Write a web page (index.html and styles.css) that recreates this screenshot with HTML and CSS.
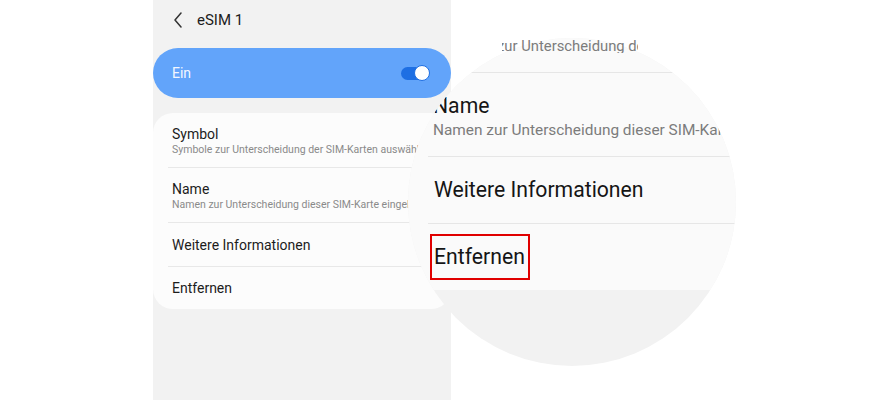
FILE: index.html
```html
<!DOCTYPE html>
<html lang="de">
<head>
<meta charset="utf-8">
<title>eSIM 1</title>
<link rel="stylesheet" href="styles.css">
</head>
<body>
<div class="stage">
  <div class="phone">
    <div class="header">
      <svg class="back" width="10" height="16" viewBox="0 0 10 16"><path d="M8 1 L2 8 L8 15" fill="none" stroke="#333" stroke-width="1.5" stroke-linecap="round" stroke-linejoin="round"/></svg>
      <span class="title">eSIM 1</span>
    </div>
    <div class="switchbar">
      <span class="on-label">Ein</span>
      <span class="toggle"><span class="track"></span><span class="knob"></span></span>
    </div>
    <div class="card">
      <div class="row two">
        <div class="row-title">Symbol</div>
        <div class="row-sub">Symbole zur Unterscheidung der SIM-Karten auswählen</div>
      </div>
      <div class="row two">
        <div class="row-title">Name</div>
        <div class="row-sub">Namen zur Unterscheidung dieser SIM-Karte eingeben</div>
      </div>
      <div class="row one">
        <div class="row-title">Weitere Informationen</div>
      </div>
      <div class="row one last">
        <div class="row-title">Entfernen</div>
      </div>
    </div>
  </div>

  <div class="lens">
    <div class="lens-card">
      <div class="lens-row top"></div>
      <div class="lens-row name">
        <div class="lens-title">Name</div>
        <div class="lens-sub">Namen zur Unterscheidung dieser SIM-Karte eingeben</div>
      </div>
      <div class="lens-row single">
        <div class="lens-title">Weitere Informationen</div>
      </div>
      <div class="lens-row single last">
        <div class="lens-title boxed">Entfernen</div>
      </div>
    </div>
  </div>

  <div class="peek"><span class="peek-text">zur Unterscheidung der SIM-Karten</span></div>
</div>
</body>
</html>
```

FILE: styles.css
```css
* { box-sizing: border-box; }
html, body { margin: 0; padding: 0; background: #ffffff; }
body { font-family: Roboto, "Noto Sans", "Liberation Sans", sans-serif; }

.stage {
  position: relative;
  width: 879px;
  height: 400px;
  overflow: hidden;
  background: #ffffff;
}

.phone {
  margin-left: 153px;
  width: 298px;
  height: 400px;
  background: #f2f2f2;
  display: flex;
  flex-direction: column;
}

.header {
  height: 40px;
  display: flex;
  align-items: center;
  padding-left: 19px;
  margin-bottom: 8px;
}
.back { margin-left: 1px; margin-right: 14px; }
.title { font-size: 15px; color: #1c1c1c; }

.switchbar {
  height: 50px;
  border-radius: 25px;
  background: #62a4fa;
  display: flex;
  align-items: center;
  justify-content: space-between;
  padding: 0 21px 0 19px;
}
.on-label { color: #f2f7ff; font-size: 14px; }
.toggle {
  position: relative;
  width: 29px;
  height: 16px;
  display: block;
}
.track {
  position: absolute;
  left: 0; top: 1.5px;
  width: 26px; height: 13px;
  border-radius: 7px;
  background: #1e6fe3;
}
.knob {
  position: absolute;
  right: 0; top: 0;
  width: 16px; height: 16px;
  border-radius: 50%;
  background: #ffffff;
  border: 1.5px solid #1e6fe3;
}

.card {
  margin-top: 15px;
  background: #fcfcfc;
  border-radius: 20px;
  padding: 0 15px;
}
.row {
  border-bottom: 1px solid #e8e8e8;
  padding-left: 4px;
  overflow: hidden;
}
.row.two { height: 55px; padding-top: 13px; }
.row.one { height: 44px; display: flex; align-items: center; }
.row.last { height: 42px; border-bottom: none; }
.row-title { font-size: 14px; line-height: 16px; color: #1c1c1c; white-space: nowrap; }
.row-sub { font-size: 10.5px; line-height: 14px; margin-top: 1px; color: #8a8a8a; white-space: nowrap; }

/* magnifier */
.peek {
  position: absolute;
  z-index: 2;
  left: 502px;
  top: 38px;
  width: 136px;
  height: 15px;
  overflow: hidden;
}
.peek-text {
  display: block;
  margin-left: -5px;
  font-size: 14.8px;
  line-height: 17px;
  color: #7c7c7c;
  white-space: nowrap;
}

.lens {
  position: absolute;
  z-index: 1;
  left: 408px;
  top: 38px;
  width: 328px;
  height: 328px;
  border-radius: 50%;
  overflow: hidden;
  background: #f2f2f2;
}
.lens-card {
  height: 252px;
  background: #fafafa;
  padding-left: 20px;
  display: flex;
  flex-direction: column;
}
.lens-row { border-bottom: 1.5px solid #e6e6e6; }
.lens-row.top { height: 35px; }
.lens-row.name { height: 84px; padding-top: 21px; padding-left: 5px; }
.lens-row.single { height: 67px; display: flex; align-items: center; padding-left: 6px; }
.lens-row.last { height: 66px; border-bottom: none; padding-left: 2px; }
.lens-title { font-size: 21.2px; line-height: 24px; color: #151515; white-space: nowrap; }
.lens-sub { font-size: 15.4px; line-height: 18px; margin-top: 3px; color: #7c7c7c; white-space: nowrap; }
.boxed {
  height: 46px;
  display: flex;
  align-items: center;
  padding: 0 3px 0 2px;
  border: 2px solid #e00000;
}
```
